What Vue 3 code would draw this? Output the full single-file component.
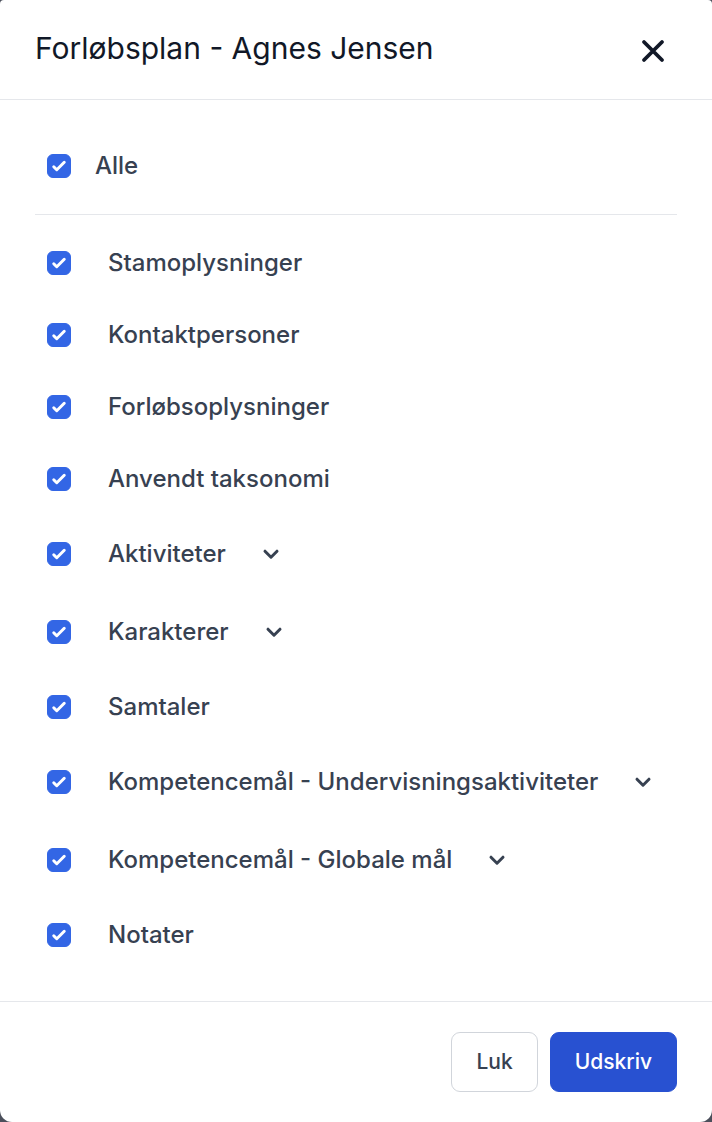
<script setup>
import { ref, computed } from 'vue'

const items = ref([
  { id: 'stam', label: 'Stamoplysninger', checked: true },
  { id: 'kontakt', label: 'Kontaktpersoner', checked: true },
  { id: 'forloeb', label: 'Forløbsoplysninger', checked: true },
  { id: 'taksonomi', label: 'Anvendt taksonomi', checked: true },
  { id: 'aktiviteter', label: 'Aktiviteter', checked: true, expandable: true },
  { id: 'karakterer', label: 'Karakterer', checked: true, expandable: true },
  { id: 'samtaler', label: 'Samtaler', checked: true },
  { id: 'undervisning', label: 'Kompetencemål - Undervisningsaktiviteter', checked: true, expandable: true },
  { id: 'globale', label: 'Kompetencemål - Globale mål', checked: true, expandable: true },
  { id: 'notater', label: 'Notater', checked: true },
])

const all = computed({
  get: () => items.value.every((i) => i.checked),
  set: (value) => items.value.forEach((i) => (i.checked = value)),
})
</script>

<template>
  <div class="dialog" role="dialog" aria-labelledby="dialog-title">
    <header class="header">
      <h1 id="dialog-title" class="title">Forløbsplan - Agnes Jensen</h1>
      <button class="close" type="button" aria-label="Luk dialog">
        <svg viewBox="0 0 36 36" width="36" height="36" fill="none" stroke="currentColor" stroke-width="3.8" stroke-linecap="round">
          <path d="M9 9 27 27M27 9 9 27" />
        </svg>
      </button>
    </header>

    <main class="body">
      <div class="all">
        <span class="tick">
          <input id="all" v-model="all" type="checkbox" class="box" />
          <svg class="mark" viewBox="0 0 16 16" fill="currentColor" aria-hidden="true">
            <path d="M12.207 4.793a1 1 0 0 1 0 1.414l-5 5a1 1 0 0 1-1.414 0l-2-2a1 1 0 0 1 1.414-1.414L6.5 9.086l4.293-4.293a1 1 0 0 1 1.414 0z" />
          </svg>
        </span>
        <label for="all">Alle</label>
      </div>

      <ul class="list">
        <li v-for="item in items" :key="item.id" class="row" :class="{ tall: item.expandable }">
          <span class="tick">
            <input :id="item.id" v-model="item.checked" type="checkbox" class="box" />
            <svg class="mark" viewBox="0 0 16 16" fill="currentColor" aria-hidden="true">
              <path d="M12.207 4.793a1 1 0 0 1 0 1.414l-5 5a1 1 0 0 1-1.414 0l-2-2a1 1 0 0 1 1.414-1.414L6.5 9.086l4.293-4.293a1 1 0 0 1 1.414 0z" />
            </svg>
          </span>
          <label :for="item.id">{{ item.label }}</label>
          <button v-if="item.expandable" class="expand" type="button" :aria-label="'Vis ' + item.label">
            <svg viewBox="0 0 30 30" width="30" height="30" fill="none" stroke="currentColor" stroke-width="3" stroke-linecap="round" stroke-linejoin="round">
              <path d="M9 12.2 15 18.2 21 12.2" />
            </svg>
          </button>
        </li>
      </ul>
    </main>

    <footer class="footer">
      <button class="btn" type="button">Luk</button>
      <button class="btn primary" type="button">Udskriv</button>
    </footer>
  </div>
</template>

<style>
body {
  margin: 0;
  background: #4b4f5b;
}
</style>

<style scoped>
.dialog {
  box-sizing: border-box;
  min-height: 100vh;
  display: flex;
  flex-direction: column;
  background: #fff;
  border-radius: 4px 4px 12px 12px;
  font-family: Inter, "Liberation Sans", sans-serif;
  font-size: 24px;
  font-weight: 500;
  line-height: 36px;
  color: #374151;
}

button {
  font: inherit;
  color: inherit;
  cursor: pointer;
}

.header {
  display: flex;
  align-items: flex-start;
  justify-content: space-between;
  padding: 26px 41px 28px 35px;
  border-bottom: 1px solid #e5e7eb;
  color: #111827;
}

.title {
  margin: 0;
  font-size: 30px;
  font-weight: 400;
  line-height: 45px;
}

.close {
  display: flex;
  padding: 7px 0 0;
  border: 0;
  background: none;
}

.body {
  flex: 1;
  padding: 18px 35px 30px;
}

.all {
  display: flex;
  align-items: center;
  gap: 24px;
  height: 96px;
  padding-left: 12px;
  border-bottom: 1px solid #e5e7eb;
}

.list {
  list-style: none;
  margin: 12px 0 0;
  padding: 0;
}

.row {
  display: flex;
  align-items: center;
  height: 72px;
  padding-left: 12px;
}

.row.tall {
  height: 78px;
}

.row label {
  margin-left: 37px;
}

.tick {
  display: grid;
  width: 24px;
  height: 24px;
  color: #fff;
}

.box,
.mark {
  grid-area: 1 / 1;
  width: 24px;
  height: 24px;
  margin: 0;
}

.box {
  appearance: none;
  border: 1px solid #d1d5db;
  border-radius: 6px;
  background: #fff;
}

.box:checked {
  border-color: #3366e5;
  background: #3366e5;
}

.mark {
  pointer-events: none;
}

.expand {
  display: flex;
  margin-left: 30px;
  padding: 0;
  border: 0;
  background: none;
}

.footer {
  display: flex;
  justify-content: flex-end;
  gap: 12px;
  padding: 30px 35px;
  border-top: 1px solid #e5e7eb;
}

.btn {
  padding: 11px 24px;
  border: 1px solid #d1d5db;
  border-radius: 9px;
  background: #fff;
  font-size: 21px;
}

.primary {
  border-color: #2851d1;
  background: #2851d1;
  color: #fff;
}
</style>
